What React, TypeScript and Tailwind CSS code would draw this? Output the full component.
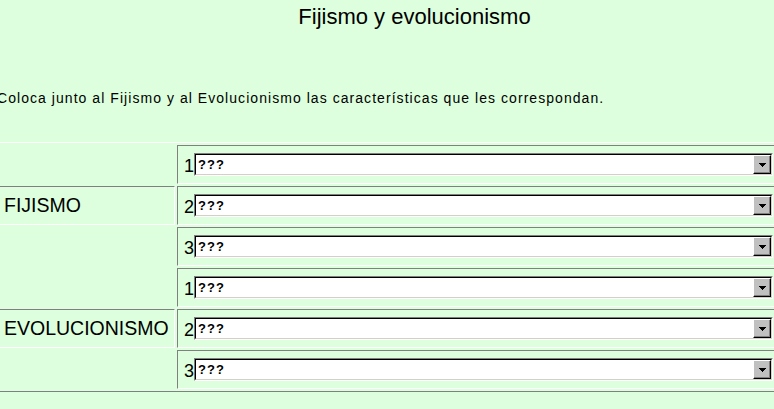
import React from 'react';

const rows = [
  { label: '', n: 1 },
  { label: 'FIJISMO', n: 2 },
  { label: '', n: 3 },
  { label: '', n: 1 },
  { label: 'EVOLUCIONISMO', n: 2 },
  { label: '', n: 3 },
];

// old windows style combo box
const Combo = () => (
  <div className="flex h-[23px] w-[579px] border border-t-[#808080] border-l-[#808080] border-b-white border-r-white">
    <div className="flex flex-1 items-stretch border border-t-black border-l-black border-b-[#d4d0c8] border-r-[#d4d0c8] bg-white">
      <span className="flex flex-1 items-center pl-[2px] text-[13px] font-bold leading-none tracking-[1px] text-black">???</span>
      <div className="flex w-[18px] items-center justify-center border border-t-white border-l-white border-b-black border-r-black bg-[#c0c0c0] shadow-[inset_-1px_-1px_#808080]">
        <svg width="7" height="4" viewBox="0 0 7 4">
          <path d="M0 0h7v1h-1v1h-1v1h-1v1h-1v-1h-1v-1h-1v-1h-1z" fill="#000" />
        </svg>
      </div>
    </div>
  </div>
);

const App = () => {
  return (
    <div className="h-[409px] w-[774px] overflow-hidden bg-[#ddffdd] font-['Liberation_Sans',Arial,sans-serif] text-black">
      <h1 className="mt-[4px] pl-[55px] text-center text-[22px] font-normal leading-[26px]">Fijismo y evolucionismo</h1>

      <p className="-ml-[3px] mt-[60px] whitespace-nowrap text-[14px] leading-[16px] tracking-[1.05px]">
        Coloca junto al Fijismo y al Evolucionismo las características que les correspondan.
      </p>

      <table className="-ml-[4px] mt-[36px] w-[820px] border-separate border-spacing-[2px] border border-t-white border-l-white border-b-[#808080] border-r-[#808080]">
        <tbody>
          {rows.map((r, i) => (
            <tr key={i}>
              <td
                className={
                  'h-[39px] w-[176px] py-0 pl-[4px] pr-[2px] align-middle text-[19.5px] whitespace-nowrap border ' +
                  (r.label
                    ? 'border-t-[#808080] border-l-[#808080] border-b-white border-r-white'
                    : 'border-transparent')
                }
              >
                {r.label}
              </td>
              <td className="h-[39px] border border-t-[#808080] border-l-[#808080] border-b-white border-r-white py-0 pl-[6px] align-middle">
                <div className="flex items-end">
                  <span className="mb-[1px] text-[18px] leading-[18px]">{r.n}</span>
                  <Combo />
                </div>
              </td>
            </tr>
          ))}
        </tbody>
      </table>
    </div>
  );
};

export default App;
